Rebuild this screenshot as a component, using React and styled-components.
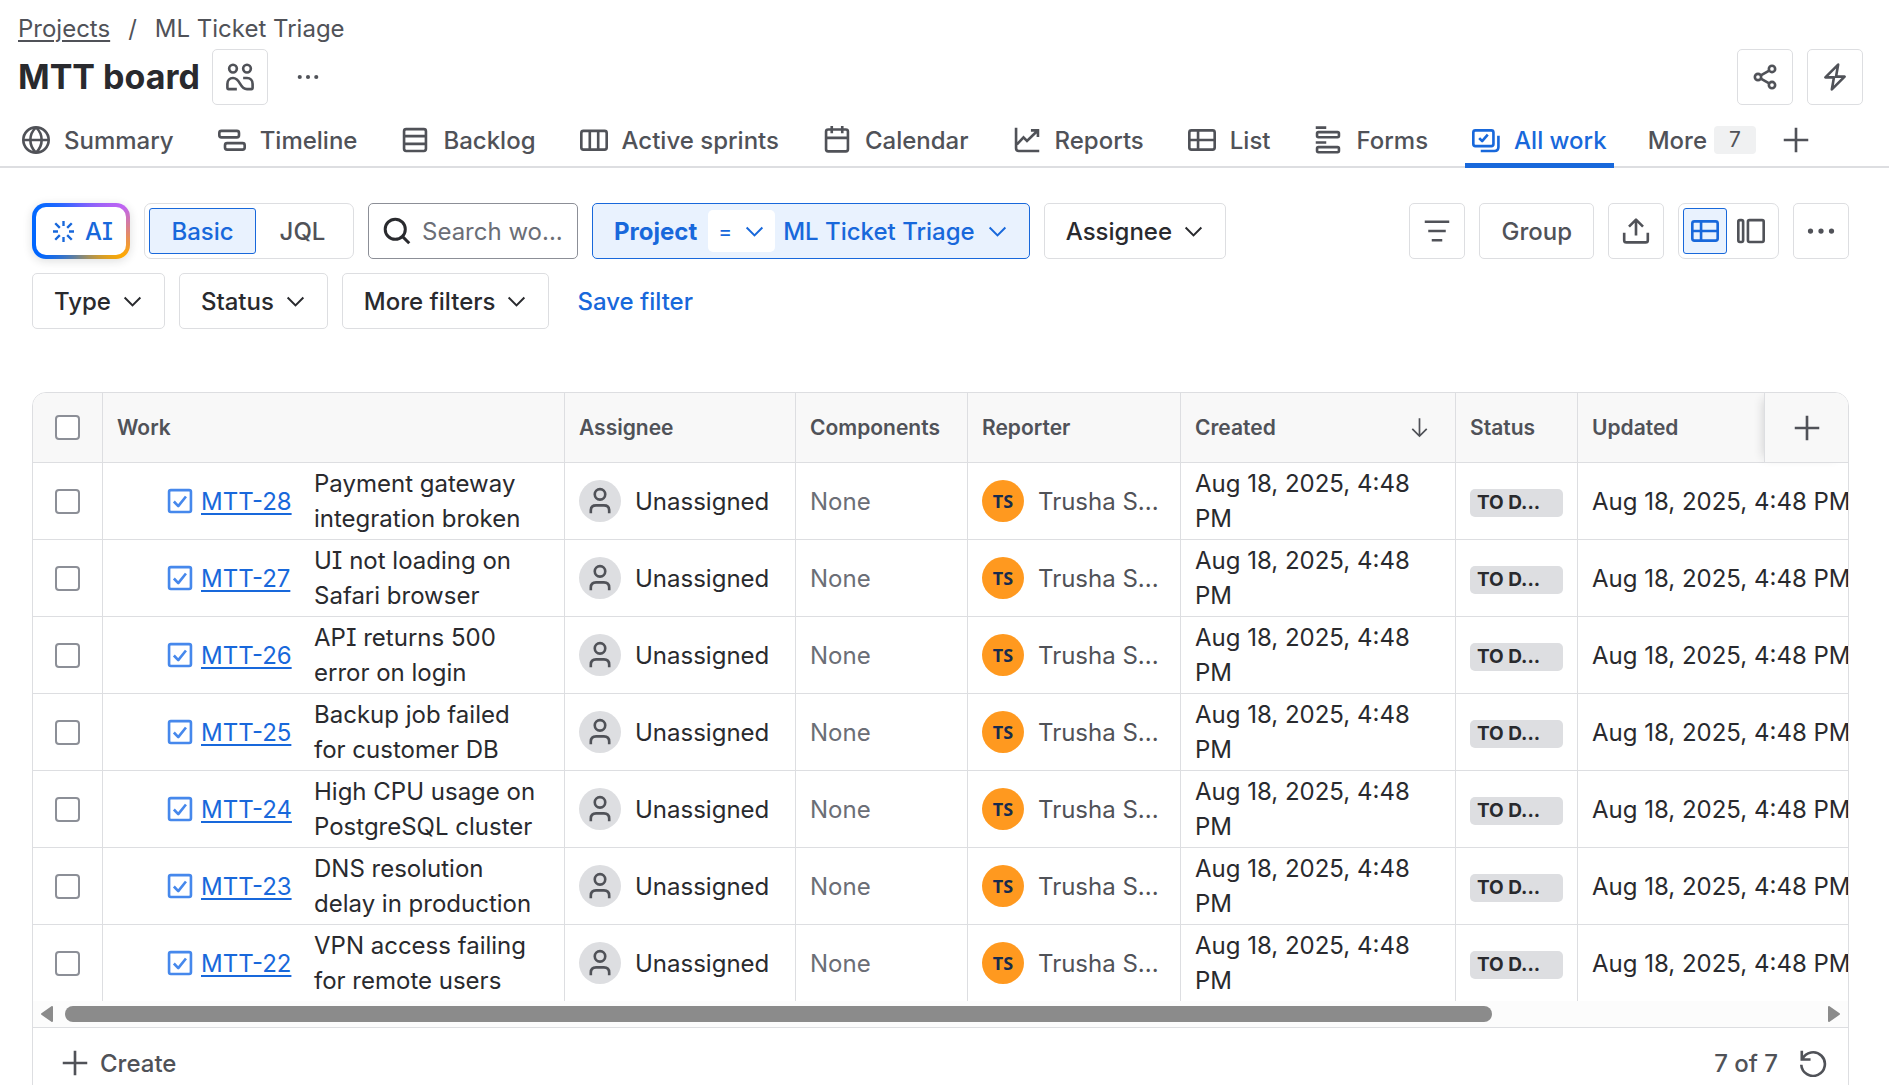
import React from 'react';
import styled, { createGlobalStyle, css } from 'styled-components';

const color = {
  text: '#292a2e',
  subtle: '#505258',
  subtlest: '#6b6e76',
  border: '#dddee1',
  field: '#8c8f97',
  blue: '#1868db',
  blueBg: '#e9f2fe',
  neutral: '#dddee1',
};

const GlobalStyle = createGlobalStyle`
  *, *::before, *::after { box-sizing: border-box; }
  body { margin: 0; background: #fff; }
  button, input { font: inherit; color: inherit; margin: 0; }
  button { cursor: pointer; }
`;

const Page = styled.div`
  height: 100vh;
  overflow: hidden;
  display: flex;
  flex-direction: column;
  font-family: Inter, "Liberation Sans", sans-serif;
  font-feature-settings: "cv08";
  font-size: 24px;
  line-height: 35px;
  color: ${color.text};
`;

const Svg = styled.svg`
  display: block;
  flex: none;
  fill: none;
  stroke: currentColor;
  stroke-width: ${(p) => p.$weight};
  stroke-linejoin: round;
`;

const shapes = {
  people: (
    <>
      <circle cx="4" cy="3.2" r="2.2" />
      <circle cx="12" cy="3.2" r="2.2" />
      <path d="M6.2 14.9H1.5c-.4 0-.7-.3-.7-.7V12c0-2.100 1.300-3.400 3.200-3.400 4.400 0 3.600 6.300 8 6.300h2.500c.4 0 .7-.3.7-.7V12c0-2.100-1.300-3.400-3.200-3.400H9.800" />
    </>
  ),
  globe: (
    <>
      <circle cx="8" cy="8" r="7.25" />
      <path d="M.8 8h14.400M8 .8c-4.300 4-4.300 10.400 0 14.400M8 .8c4.300 4 4.300 10.400 0 14.400" />
    </>
  ),
  timeline: (
    <>
      <rect x=".75" y="2.75" width="11.25" height="3.75" rx="1.2" />
      <rect x="4" y="9.75" width="11.25" height="3.75" rx="1.2" />
    </>
  ),
  backlog: (
    <>
      <rect x="1.75" y="1.75" width="12.5" height="12.5" rx="1.2" />
      <path d="M1.75 5.8h12.5M1.75 10.2h12.5" />
    </>
  ),
  board: (
    <>
      <rect x=".75" y="2.75" width="14.5" height="10.75" rx="1.2" />
      <path d="M5.6 2.75v10.75M10.4 2.75v10.75" />
    </>
  ),
  calendar: (
    <>
      <rect x="1.75" y="2" width="12.5" height="12.5" rx="1.2" />
      <path d="M5 0v4.2M11 0v4.2M1.75 6.75h12.5" />
    </>
  ),
  reports: (
    <path
      strokeLinejoin="miter"
      d="M1.75 1v11.75c0 1 .5 1.5 1.5 1.5H15M2.25 10.5l3.75-4 2 2 6-5.75M10.25 2.5h4v3.75"
    />
  ),
  list: (
    <>
      <rect x=".75" y="2.5" width="14.5" height="11" rx="1.2" />
      <path d="M.75 8h14.5M5.75 2.5v11" />
    </>
  ),
  forms: (
    <>
      <path d="M1 .9h6M1 9.4h6" />
      <rect x="1.75" y="3.5" width="12.5" height="2.9" rx=".8" />
      <rect x="1.75" y="12.1" width="12.5" height="2.9" rx=".8" />
    </>
  ),
  allWork: (
    <>
      <rect x=".75" y="2.5" width="11.5" height="9" rx="1.2" />
      <path d="M15.1 5.5v6.500c0 1.400-.9 2.300-2.300 2.300H5M4.100 6.900l1.700 1.700 3.200-3.700" />
    </>
  ),
  plus: <path d="M8 1v14M1 8h14" />,
  share: (
    <>
      <circle cx="4" cy="8" r="1.8" />
      <circle cx="12" cy="3.4" r="1.8" />
      <circle cx="12" cy="12.6" r="1.8" />
      <path d="M5.6 7.1l4.800-2.800M5.600 8.900l4.800 2.800" />
    </>
  ),
  bolt: <path d="M9.8.9L2.500 8.200h4.900L6.200 15.100l7.300-7.300H8.600z" />,
  dots: (
    <g fill="currentColor" stroke="none">
      <circle cx="2" cy="8" r="1.5" />
      <circle cx="8" cy="8" r="1.5" />
      <circle cx="14" cy="8" r="1.5" />
    </g>
  ),
  sparkle: (
    <path d="M8 0v3.800M8 12.200V16M0 8h3.800M12.200 8H16M1.700 1.700l3.500 3.500M10.800 10.800l3.500 3.500M1.700 14.300l3.500-3.500M10.800 5.200l3.500-3.500" />
  ),
  search: (
    <>
      <circle cx="7" cy="7" r="5.75" />
      <path d="M11.2 11.2L15 15" />
    </>
  ),
  chevron: <path strokeLinejoin="miter" d="M2 5l6 6 6-6" />,
  filter: <path d="M1 2.700h14M3 8h10M5 13.300h6" />,
  upload: <path d="M1.250 9v4.250c0 .8.500 1.250 1.250 1.250h11c.8 0 1.250-.5 1.250-1.250V9M8 10.500V1.500M4 5.500l4-4 4 4" />,
  split: (
    <>
      <rect x=".75" y="1.75" width="2.75" height="12.5" rx=".9" />
      <rect x="6.25" y="1.75" width="9" height="12.5" rx=".9" />
    </>
  ),
  task: (
    <>
      <rect x="1.75" y="1.75" width="12.5" height="12.5" rx="1" />
      <path d="M4.500 8.300l2.500 2.600 4.400-5.500" />
    </>
  ),
  person: (
    <>
      <circle cx="8" cy="4.2" r="3" />
      <path d="M2.750 15v-1.500c0-1.900 1.100-3 3-3h4.500c1.900 0 3 1.100 3 3V15" />
    </>
  ),
  down: <path strokeLinejoin="miter" d="M8 1v13.500M2.500 9L8 14.500 13.500 9" />,
  refresh: <path strokeLinejoin="miter" d="M1.600 1v5h5M1.900 5.800A6.750 6.750 0 1 1 1.300 9" />,
};

const Icon = ({ name, size = 28, weight = 1.5 }) => (
  <Svg viewBox="0 0 16 16" width={size} height={size} $weight={weight} aria-hidden="true">
    {shapes[name]}
  </Svg>
);

const Header = styled.header`
  padding: 11px 26px 0 18px;
`;

const Breadcrumbs = styled.nav`
  display: flex;
  gap: 18px;
  color: ${color.subtle};
  a { color: inherit; text-underline-offset: 3px; }
`;

const TitleRow = styled.div`
  display: flex;
  align-items: center;
  gap: 12px;
  margin-top: 3px;
`;

const Title = styled.h1`
  margin: 0;
  font-size: 34px;
  line-height: 42px;
  font-weight: 650;
`;

const Actions = styled.div`
  display: flex;
  gap: 14px;
  margin-left: auto;
`;

const Button = styled.button`
  flex: none;
  display: flex;
  align-items: center;
  justify-content: center;
  gap: 11px;
  height: 56px;
  padding: 0 ${(p) => (p.$square ? 0 : 21)}px;
  ${(p) => p.$square && 'width: 56px;'}
  border: 1px solid ${(p) => (p.$bare ? 'transparent' : color.border)};
  border-radius: 5px;
  background: transparent;
  color: ${(p) => (p.$strong ? color.text : color.subtle)};
  font-weight: 500;
  white-space: nowrap;
`;

const TabBar = styled.nav`
  display: flex;
  align-items: stretch;
  gap: 30px;
  height: 63px;
  padding: 0 15px;
  box-shadow: inset 0 -2px ${color.border};
`;

const Tab = styled.a`
  display: flex;
  align-items: center;
  gap: 14px;
  padding: 7px 7px 0;
  color: ${color.subtle};
  font-weight: 500;
  text-decoration: none;
  white-space: nowrap;
  ${(p) => p.$active && css`
    color: ${color.blue};
    box-shadow: inset 0 -5px ${color.blue};
  `}
`;

const MoreTab = styled.button`
  display: flex;
  align-items: center;
  gap: 7px;
  padding: 7px 0 0 4px;
  border: 0;
  background: none;
  color: ${color.subtle};
  font-weight: 500;
`;

const Count = styled.span`
  width: 42px;
  height: 28px;
  border-radius: 4px;
  background: #f0f1f2;
  font-size: 21px;
  line-height: 28px;
  font-weight: 400;
  text-align: center;
`;

const AddTab = styled(MoreTab)`
  padding-left: 0;
  margin-left: -4px;
`;

const Main = styled.main`
  flex: 1;
  min-height: 0;
  display: flex;
  flex-direction: column;
  gap: 63px;
  padding: 35px 40px 0 32px;
`;

const Toolbar = styled.div`
  display: flex;
  align-items: flex-start;
  justify-content: space-between;
  gap: 14px;
`;

const Filters = styled.div`
  flex: 0 1 1260px;
  display: flex;
  flex-wrap: wrap;
  gap: 14px;
`;

const AiButton = styled.button`
  display: flex;
  align-items: center;
  justify-content: center;
  gap: 11px;
  width: 98px;
  height: 56px;
  padding: 0 0 0 4px;
  border: 4px solid transparent;
  border-radius: 14px;
  background:
    linear-gradient(#fff, #fff) padding-box,
    conic-gradient(#6a62ff, #bf63f3 60deg, #ffa900 120deg, #0065ff 240deg, #0469ff 300deg, #6a62ff) border-box;
  box-shadow: 0 2px 10px rgba(30, 31, 33, 0.15);
  color: ${color.blue};
  font-weight: 500;
`;

const Segmented = styled.div`
  display: flex;
  align-items: center;
  height: 56px;
  padding: 0 4px;
  border: 1px solid ${color.border};
  border-radius: 7px;
`;

const Segment = styled.button`
  display: flex;
  align-items: center;
  justify-content: center;
  width: ${(p) => p.$width}px;
  height: 46px;
  padding: 0;
  border: 1px solid ${(p) => (p.$on ? color.blue : 'transparent')};
  border-radius: 3px;
  background: ${(p) => (p.$on ? color.blueBg : 'transparent')};
  color: ${(p) => (p.$on ? color.blue : color.subtle)};
  font-weight: 500;
`;

const SearchBox = styled.label`
  display: flex;
  align-items: center;
  gap: 11px;
  width: 210px;
  height: 56px;
  padding: 0 7px 0 14px;
  border: 1px solid ${color.field};
  border-radius: 5px;
  input {
    flex: 1;
    min-width: 0;
    padding: 0;
    border: 0;
    outline: 0;
    background: none;
  }
  input::placeholder { color: ${color.subtlest}; opacity: 1; }
`;

const Chip = styled.div`
  display: flex;
  align-items: center;
  gap: 8px;
  height: 56px;
  padding: 0 21px;
  border: 1px solid ${color.blue};
  border-radius: 5px;
  background: ${color.blueBg};
  color: ${color.blue};
  strong { font-weight: 700; padding-right: 3px; }
`;

const Operator = styled.button`
  display: flex;
  align-items: center;
  justify-content: space-between;
  width: 67px;
  height: 42px;
  padding: 0 10px;
  border: 0;
  border-radius: 5px;
  background: #fff;
  font-size: 21px;
`;

const ChipValue = styled.button`
  display: flex;
  align-items: center;
  gap: 12px;
  padding: 0;
  border: 0;
  background: none;
  font-weight: 500;
`;

const SaveLink = styled.button`
  padding: 0 14px;
  border: 0;
  background: none;
  color: ${color.blue};
  font-weight: 500;
`;

const Card = styled.section`
  flex: none;
  border: 1px solid ${color.border};
  border-radius: 14px;
  overflow: hidden;
`;

const Scroller = styled.div`
  overflow: hidden;
`;

const Table = styled.table`
  table-layout: fixed;
  width: 2242px;
  border-collapse: separate;
  border-spacing: 0;
`;

const cell = css`
  padding: 0 14px;
  border-right: 1px solid ${color.border};
  text-align: left;
`;

const Th = styled.th`
  ${cell}
  height: 70px;
  border-bottom: 1px solid ${color.border};
  background: #f8f8f8;
  color: ${color.subtle};
  font-size: 21px;
  line-height: 28px;
  font-weight: 600;
`;

const StickyTh = styled(Th)`
  position: sticky;
  right: 0;
  padding: 0;
  border-right: 0;
  border-left: 1px solid ${color.border};
  box-shadow: -6px 0 10px -6px rgba(30, 31, 33, 0.2);
`;

const HeadFlex = styled.div`
  display: flex;
  align-items: center;
  justify-content: space-between;
  padding-right: 11px;
`;

const PlainButton = styled.button`
  display: flex;
  align-items: center;
  justify-content: center;
  gap: ${(p) => p.$gap || 0}px;
  width: ${(p) => (p.$fill ? '100%' : 'auto')};
  padding: 0;
  border: 0;
  background: none;
  color: ${color.subtle};
  font-weight: 500;
`;

const Td = styled.td`
  ${cell}
  height: 76px;
  color: ${(p) => (p.$muted ? color.subtlest : color.text)};
  white-space: ${(p) => (p.$nowrap ? 'nowrap' : 'normal')};
  tr:not(:last-child) > & {
    height: 77px;
    border-bottom: 1px solid ${color.border};
  }
`;

const Check = styled.input`
  appearance: none;
  display: block;
  width: 25px;
  height: 25px;
  margin: 0 auto;
  border: 2px solid ${color.field};
  border-radius: 4px;
  background: #fff;
`;

const Work = styled.div`
  display: flex;
  align-items: center;
  padding: 0 7px 0 49px;
`;

const TypeIcon = styled.span`
  margin-right: 7px;
  color: #4688ec;
`;

const Key = styled.a`
  flex: none;
  width: 113px;
  color: ${color.blue};
  text-underline-offset: 3px;
`;

const Person = styled.div`
  display: flex;
  align-items: center;
  gap: 14px;
  white-space: nowrap;
  color: ${(p) => (p.$muted ? color.subtle : color.text)};
`;

const Avatar = styled.span`
  flex: none;
  display: flex;
  align-items: center;
  justify-content: center;
  width: 42px;
  height: 42px;
  border-radius: 50%;
  background: ${(p) => (p.$user ? '#ff991f' : color.neutral)};
  color: ${(p) => (p.$user ? '#172b4d' : color.subtle)};
  font: 700 18px "Open Sans", sans-serif;
`;

const Lozenge = styled.span`
  display: block;
  height: 28px;
  margin-top: 3px;
  padding: 0 7px;
  border-radius: 5px;
  background: ${color.neutral};
  font-size: 19px;
  line-height: 28px;
  font-weight: 700;
  white-space: nowrap;
`;

const ScrollBar = styled.div`
  display: flex;
  align-items: center;
  gap: 12px;
  height: 27px;
  padding: 0 8px;
  background: #fcfcfc;
  border-bottom: 1px solid ${color.border};
`;

const Track = styled.div`
  flex: 1;
`;

const Thumb = styled.div`
  width: 81.5%;
  height: 16px;
  border-radius: 8px;
  background: #8b8b8b;
`;

const Arrow = styled.svg`
  display: block;
  width: 12px;
  height: 16px;
  fill: #8b8b8b;
  stroke: #8b8b8b;
  stroke-width: 2;
  stroke-linejoin: round;
`;

const Footer = styled.footer`
  display: flex;
  align-items: center;
  justify-content: space-between;
  height: 70px;
  padding: 0 21px 0 28px;
  color: ${color.subtle};
`;

const tabs = [
  ['globe', 'Summary'],
  ['timeline', 'Timeline'],
  ['backlog', 'Backlog'],
  ['board', 'Active sprints'],
  ['calendar', 'Calendar'],
  ['reports', 'Reports'],
  ['list', 'List'],
  ['forms', 'Forms'],
  ['allWork', 'All work'],
];

const items = [
  ['MTT-28', 'Payment gateway integration broken'],
  ['MTT-27', 'UI not loading on Safari browser'],
  ['MTT-26', 'API returns 500 error on login'],
  ['MTT-25', 'Backup job failed for customer DB'],
  ['MTT-24', 'High CPU usage on PostgreSQL cluster'],
  ['MTT-23', 'DNS resolution delay in production'],
  ['MTT-22', 'VPN access failing for remote users'],
];

const date = 'Aug 18, 2025, 4:48 PM';

const Dropdown = ({ children }) => (
  <Button $strong>
    {children}
    <Icon name="chevron" size={21} />
  </Button>
);

export default function App() {
  return (
    <Page>
      <GlobalStyle />
      <Header>
        <Breadcrumbs aria-label="Breadcrumbs">
          <a href="#projects">Projects</a>
          <span>/</span>
          <span>ML Ticket Triage</span>
        </Breadcrumbs>
        <TitleRow>
          <Title>MTT board</Title>
          <Button $square aria-label="Team"><Icon name="people" /></Button>
          <Button $square $bare aria-label="Board actions"><Icon name="dots" size={22} /></Button>
          <Actions>
            <Button $square aria-label="Share"><Icon name="share" /></Button>
            <Button $square aria-label="Automation"><Icon name="bolt" /></Button>
          </Actions>
        </TitleRow>
      </Header>
      <TabBar aria-label="Board views">
        {tabs.map(([icon, label]) => (
          <Tab key={label} href={`#${icon}`} $active={icon === 'allWork'}>
            <Icon name={icon} />
            {label}
          </Tab>
        ))}
        <MoreTab>More<Count>7</Count></MoreTab>
        <AddTab aria-label="Add view"><Icon name="plus" /></AddTab>
      </TabBar>
      <Main>
        <Toolbar>
          <Filters>
            <AiButton><Icon name="sparkle" size={21} weight={1.8} />AI</AiButton>
            <Segmented>
              <Segment $on $width={107}>Basic</Segment>
              <Segment $width={93}>JQL</Segment>
            </Segmented>
            <SearchBox>
              <Icon name="search" weight={1.7} />
              <input type="text" placeholder="Search wo..." aria-label="Search work" />
            </SearchBox>
            <Chip>
              <strong>Project</strong>
              <Operator aria-label="Operator: equals">=<Icon name="chevron" size={21} /></Operator>
              <ChipValue>ML Ticket Triage<Icon name="chevron" size={21} /></ChipValue>
            </Chip>
            <Dropdown>Assignee</Dropdown>
            <Dropdown>Type</Dropdown>
            <Dropdown>Status</Dropdown>
            <Dropdown>More filters</Dropdown>
            <SaveLink>Save filter</SaveLink>
          </Filters>
          <Actions>
            <Button $square aria-label="Sort"><Icon name="filter" /></Button>
            <Button>Group</Button>
            <Button $square aria-label="Export"><Icon name="upload" /></Button>
            <Segmented>
              <Segment $on $width={44} aria-label="List view"><Icon name="list" /></Segment>
              <Segment $width={47} aria-label="Detail view"><Icon name="split" /></Segment>
            </Segmented>
            <Button $square aria-label="More actions"><Icon name="dots" /></Button>
          </Actions>
        </Toolbar>
        <Card>
          <Scroller>
            <Table>
              <colgroup>
                {[70, 462, 231, 172, 213, 275, 122].map((w, i) => <col key={i} width={w} />)}
                <col />
                <col width={84} />
              </colgroup>
              <thead>
                <tr>
                  <Th><Check type="checkbox" aria-label="Select all" /></Th>
                  <Th>Work</Th>
                  <Th>Assignee</Th>
                  <Th>Components</Th>
                  <Th>Reporter</Th>
                  <Th><HeadFlex>Created<Icon name="down" size={21} weight={1.3} /></HeadFlex></Th>
                  <Th>Status</Th>
                  <Th>Updated</Th>
                  <StickyTh><PlainButton $fill aria-label="Add column"><Icon name="plus" /></PlainButton></StickyTh>
                </tr>
              </thead>
              <tbody>
                {items.map(([key, summary]) => (
                  <tr key={key}>
                    <Td><Check type="checkbox" aria-label={`Select ${key}`} /></Td>
                    <Td>
                      <Work>
                        <TypeIcon><Icon name="task" /></TypeIcon>
                        <Key href={`#${key}`}>{key}</Key>
                        <span>{summary}</span>
                      </Work>
                    </Td>
                    <Td><Person><Avatar><Icon name="person" /></Avatar>Unassigned</Person></Td>
                    <Td $muted>None</Td>
                    <Td><Person $muted><Avatar $user>TS</Avatar>Trusha S...</Person></Td>
                    <Td>{date}</Td>
                    <Td><Lozenge>TO D...</Lozenge></Td>
                    <Td $nowrap>{date}</Td>
                    <Td />
                  </tr>
                ))}
              </tbody>
            </Table>
          </Scroller>
          <ScrollBar>
            <Arrow viewBox="0 0 12 16"><path d="M11 1v14L1 8z" /></Arrow>
            <Track><Thumb /></Track>
            <Arrow viewBox="0 0 12 16"><path d="M1 1v14l10-7z" /></Arrow>
          </ScrollBar>
          <Footer>
            <PlainButton $gap={11}><Icon name="plus" />Create</PlainButton>
            <PlainButton $gap={21}>7 of 7<Icon name="refresh" /></PlainButton>
          </Footer>
        </Card>
      </Main>
    </Page>
  );
}
